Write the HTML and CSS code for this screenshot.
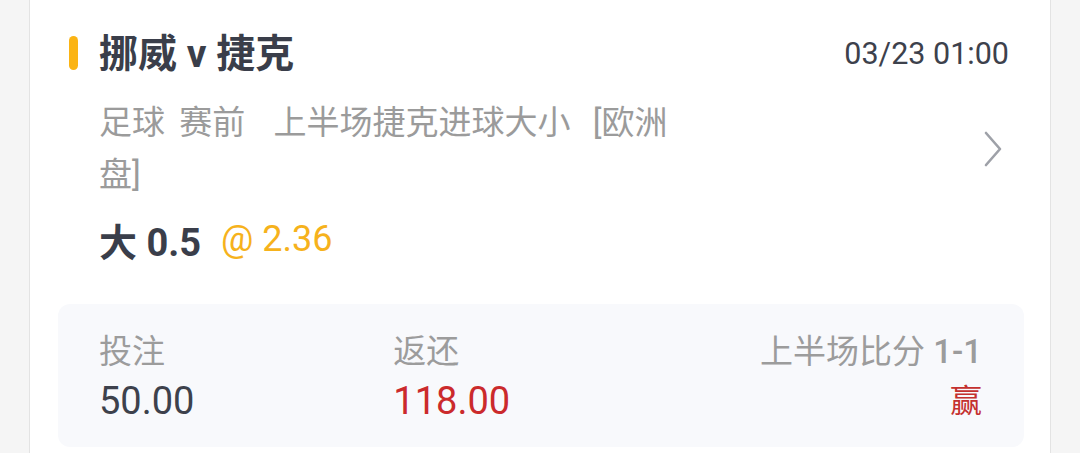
FILE: index.html
```html
<!DOCTYPE html>
<html lang="zh-CN">
<head>
    <meta charset="UTF-8">
    <meta name="viewport" content="width=device-width, initial-scale=1.0">
    <title>注单详情</title>
    <link rel="stylesheet" href="styles.css">
</head>
<body>

    <div class="card">
        <!-- Match header -->
        <div class="match-head">
            <span class="mark"></span>
            <h2 class="teams">挪威 v 捷克</h2>
            <span class="time">03/23 01:00</span>
        </div>

        <!-- Market info -->
        <div class="market">
            <p class="market-desc">足球 赛前  上半场捷克进球大小 <span class="odds-type">[欧洲盘]</span></p>
            <svg class="arrow" width="18" height="36" viewBox="0 0 18 36">
                <polyline points="2,2 16,18 2,34" fill="none" stroke="#9ea1a8" stroke-width="2.6" stroke-linejoin="round" stroke-linecap="round"/>
            </svg>
        </div>

        <div class="pick">
            <span class="pick-name">大 0.5</span>
            <span class="odds">@ 2.36</span>
        </div>

        <!-- Stake summary -->
        <div class="summary">
            <div class="cell">
                <span class="label">投注</span>
                <span class="value">50.00</span>
            </div>
            <div class="cell">
                <span class="label">返还</span>
                <span class="value red">118.00</span>
            </div>
            <div class="cell right">
                <span class="label">上半场比分 <b class="score">1-1</b></span>
                <span class="result">赢</span>
            </div>
        </div>
    </div>

</body>
</html>
```

FILE: styles.css
```css
* {
    margin: 0;
    padding: 0;
    box-sizing: border-box;
}

body {
    font-family: Roboto, 'Noto Sans CJK SC', sans-serif;
    background-color: #f5f5f5;
    height: 100vh;
    overflow: hidden;
}

.card {
    background-color: #fff;
    margin-left: 29px;
    width: 1022px;
    min-height: 100%;
    border-left: 1px solid #e3e3e3;
    border-right: 1px solid #e3e3e3;
    padding: 28px 26px 20px 28px;
}

.match-head {
    display: flex;
    align-items: center;
    height: 50px;
    padding: 0 15px 0 11px;
}

.mark {
    width: 9px;
    height: 34px;
    border-radius: 5px;
    background-color: #fbb414;
    margin-right: 21px;
}

.teams {
    flex: 1;
    font-size: 39px;
    font-weight: bold;
    color: #3a3e4a;
    margin-top: -6px;
}

.time {
    font-size: 30.5px;
    color: #3d414c;
}

.market {
    display: flex;
    align-items: center;
    justify-content: space-between;
    margin-top: 19px;
    padding: 0 22px 0 41px;
}

.market-desc {
    width: 595px;
    font-size: 33px;
    line-height: 52px;
    color: #9b9b9b;
    white-space: pre-wrap;
    word-spacing: 6px;
}

.odds-type {
    margin-left: 8px;
    word-spacing: 0;
}

.arrow {
    display: block;
}

.pick {
    display: flex;
    align-items: center;
    height: 50px;
    margin-top: 13px;
    padding-left: 41px;
}

.pick-name {
    font-size: 38px;
    font-weight: bold;
    color: #3a3e4a;
    margin-right: 20px;
}

.odds {
    font-size: 36px;
    color: #f6b21c;
}

.summary {
    display: grid;
    grid-template-columns: 1fr 1fr 1fr;
    background-color: #f8f9fc;
    border-radius: 12px;
    margin-top: 40px;
    padding: 24px 42px 21px 41px;
}

.cell {
    display: flex;
    flex-direction: column;
}

.cell.right {
    align-items: flex-end;
}

.label {
    font-size: 33px;
    line-height: 48px;
    color: #9c9c9c;
}

.score {
    font-weight: 500;
}

.value {
    font-size: 38px;
    line-height: 50px;
    color: #3d414c;
}

.value.red {
    color: #cb2a2c;
}

.result {
    font-size: 32px;
    line-height: 50px;
    color: #c4312f;
}
```
